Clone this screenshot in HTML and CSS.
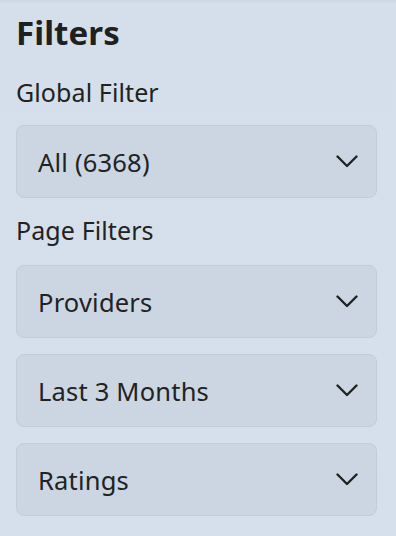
FILE: index.html
```html
<!DOCTYPE html>
<html>
<head>
<meta charset="utf-8">
<link rel="stylesheet" href="styles.css">
</head>
<body>
<aside class="panel">
  <h1 class="title">Filters</h1>
  <div class="group">
    <div class="label">Global Filter</div>
    <div class="select"><span>All (6368)</span><svg class="chev" width="22" height="13" viewBox="0 0 22 13"><path d="M1.5 1.5 L11 11 L20.5 1.5" fill="none" stroke="#222" stroke-width="2.4" stroke-linecap="round" stroke-linejoin="round"/></svg></div>
  </div>
  <div class="group">
    <div class="label label-page">Page Filters</div>
    <div class="stack">
      <div class="select"><span>Providers</span><svg class="chev" width="22" height="13" viewBox="0 0 22 13"><path d="M1.5 1.5 L11 11 L20.5 1.5" fill="none" stroke="#222" stroke-width="2.4" stroke-linecap="round" stroke-linejoin="round"/></svg></div>
      <div class="select"><span>Last 3 Months</span><svg class="chev" width="22" height="13" viewBox="0 0 22 13"><path d="M1.5 1.5 L11 11 L20.5 1.5" fill="none" stroke="#222" stroke-width="2.4" stroke-linecap="round" stroke-linejoin="round"/></svg></div>
      <div class="select"><span>Ratings</span><svg class="chev" width="22" height="13" viewBox="0 0 22 13"><path d="M1.5 1.5 L11 11 L20.5 1.5" fill="none" stroke="#222" stroke-width="2.4" stroke-linecap="round" stroke-linejoin="round"/></svg></div>
    </div>
  </div>
</aside>
</body>
</html>
```

FILE: styles.css
```css
html, body {
  margin: 0;
  padding: 0;
  height: 100%;
}
body {
  background: linear-gradient(180deg, #c9d5e2 0px, #d4dfeb 4px, #d5e0ec 100%);
  font-family: "Noto Sans", "Open Sans", sans-serif;
  color: #222;
}
.panel {
  padding: 13px 19px 0 16px;
  display: flex;
  flex-direction: column;
}
.title {
  margin: 0 0 23px 0;
  font-size: 33px;
  font-weight: 700;
  line-height: 40px;
  color: #202020;
  letter-spacing: 0.1px;
}
.group {
  display: flex;
  flex-direction: column;
}
.label {
  font-size: 25px;
  line-height: 32px;
  margin-bottom: 17px;
  color: #222;
  letter-spacing: 0.1px;
}
.label-page {
  margin-bottom: 19px;
}
.group + .group {
  margin-top: 16px;
}
.stack {
  display: flex;
  flex-direction: column;
  gap: 16px;
}
.select {
  box-sizing: border-box;
  height: 73px;
  display: flex;
  align-items: center;
  justify-content: space-between;
  padding: 0 18px 0 21px;
  background: #cbd6e2;
  border: 1.5px solid #c1ccd8;
  border-radius: 8px;
  font-size: 25.5px;
  letter-spacing: 0.2px;
  color: #222;
}
.chev {
  display: block;
}
```
